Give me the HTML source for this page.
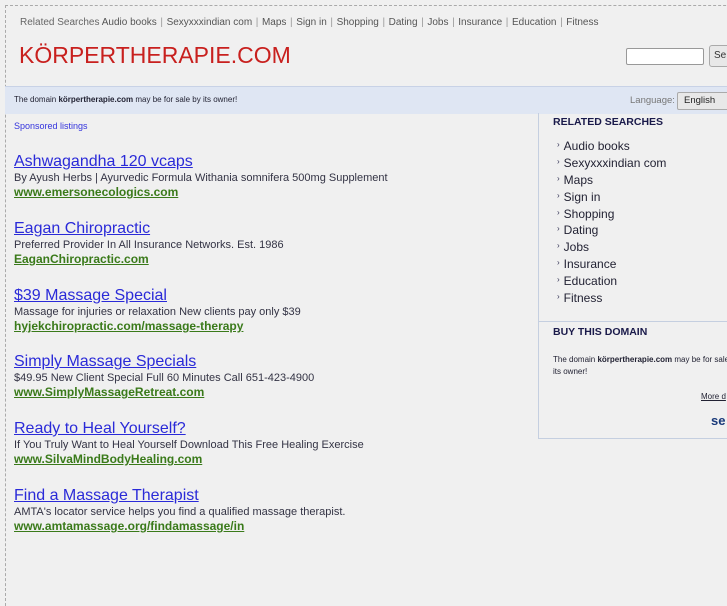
<!DOCTYPE html><html><head><meta charset="utf-8"><style>
body{margin:0;background:#f0f0f0;font-family:"Liberation Sans",sans-serif;width:727px;height:545px;overflow:hidden;position:relative}
.frame{position:absolute;left:5px;top:5px;width:760px;height:600px;border-left:1px dashed #aaa;border-top:1px dashed #aaa}
.top{position:absolute;left:20px;top:17px;font-size:10px;color:#666;white-space:nowrap}
.top span{color:#555}.top b{font-weight:normal;color:#999;margin:0 3.6px}
.logo{position:absolute;left:19px;top:42px;font-size:23px;color:#c8201e}
.srch{position:absolute;left:626px;top:48px;width:76px;height:15px;background:#fff;border:1px solid #999;border-radius:2px}
.btn{position:absolute;left:709px;top:45px;width:30px;height:20px;background:#e8e8e8;border:1px solid #aaa;border-radius:3px;font-size:10px;line-height:20px;padding-left:4px;color:#333}
.band{position:absolute;left:5px;top:86px;width:722px;height:27px;background:#dfe6f3;border-top:1px solid #c8d2e6}
.band .t{position:absolute;left:9px;top:8px;font-size:8px;color:#223}
.lang{position:absolute;left:630px;top:95px;font-size:9.5px;color:#777}
.sel{position:absolute;left:677px;top:92px;width:50px;height:16px;background:#e8e8e8;border:1px solid #aaa;border-radius:2px;font-size:9.5px;line-height:16px;padding-left:6px;color:#222}
.sp{position:absolute;left:14px;top:121px;font-size:9px;color:#3333dd}
.ad{position:absolute;left:14px}
.ad a{display:block;font-size:16px;color:#2a2ad8;text-decoration:underline;line-height:18px}
.ad p{margin:0;font-size:11px;color:#334;line-height:14px}
.ad u{display:block;font-size:12px;font-weight:bold;color:#3a7a1a;line-height:14px}
.side{position:absolute;left:538px;top:113px;width:200px;height:325px;border-left:1px solid #c5cfe0;border-bottom:1px solid #c5cfe0}
.side h4{position:absolute;left:14px;margin:0;font-size:10.5px;color:#1a1a4a}
.side ul{position:absolute;left:18px;top:25px;margin:0;padding:0;list-style:none}
.side li{font-size:12px;color:#223;height:16.9px;line-height:16.9px;white-space:nowrap}
.side li:before{content:"\203A";font-size:8px;line-height:0;margin-right:4px;color:#335;vertical-align:3px}
.hr{position:absolute;left:0;top:208px;width:200px;border-top:1px solid #c5cfe0}
</style></head><body>
<div class="frame"></div>
<div class="top">Related Searches <span>Audio books</span><b>|</b><span>Sexyxxxindian com</span><b>|</b><span>Maps</span><b>|</b><span>Sign in</span><b>|</b><span>Shopping</span><b>|</b><span>Dating</span><b>|</b><span>Jobs</span><b>|</b><span>Insurance</span><b>|</b><span>Education</span><b>|</b><span>Fitness</span></div>
<div class="logo">KÖRPERTHERAPIE.COM</div>
<div class="srch"></div><div class="btn">Se</div>
<div class="band"><div class="t">The domain <b>körpertherapie.com</b> may be for sale by its owner!</div></div>
<div class="lang">Language:</div><div class="sel">English</div>
<div class="sp">Sponsored listings</div>
<div class="ad" style="top:153px"><a>Ashwagandha 120 vcaps</a><p>By Ayush Herbs | Ayurvedic Formula Withania somnifera 500mg Supplement</p><u>www.emersonecologics.com</u></div>
<div class="ad" style="top:220px"><a>Eagan Chiropractic</a><p>Preferred Provider In All Insurance Networks. Est. 1986</p><u>EaganChiropractic.com</u></div>
<div class="ad" style="top:287px"><a>$39 Massage Special</a><p>Massage for injuries or relaxation New clients pay only $39</p><u>hyjekchiropractic.com/massage-therapy</u></div>
<div class="ad" style="top:353px"><a>Simply Massage Specials</a><p>$49.95 New Client Special Full 60 Minutes Call 651-423-4900</p><u>www.SimplyMassageRetreat.com</u></div>
<div class="ad" style="top:420px"><a>Ready to Heal Yourself?</a><p>If You Truly Want to Heal Yourself Download This Free Healing Exercise</p><u>www.SilvaMindBodyHealing.com</u></div>
<div class="ad" style="top:487px"><a>Find a Massage Therapist</a><p>AMTA's locator service helps you find a qualified massage therapist.</p><u>www.amtamassage.org/findamassage/in</u></div>
<div class="side">
<h4 style="top:3px">RELATED SEARCHES</h4>
<ul><li>Audio books</li><li>Sexyxxxindian com</li><li>Maps</li><li>Sign in</li><li>Shopping</li><li>Dating</li><li>Jobs</li><li>Insurance</li><li>Education</li><li>Fitness</li></ul>
<div class="hr"></div>
<h4 style="top:213px">BUY THIS DOMAIN</h4>
<div style="position:absolute;left:14px;top:241px;width:190px;font-size:8px;color:#223;line-height:12px">The domain <b>körpertherapie.com</b> may be for sale by its owner!</div>
<div style="position:absolute;left:162px;top:279px;font-size:8px;color:#223;text-decoration:underline">More d</div>
<div style="position:absolute;left:172px;top:300px;font-size:13px;font-weight:bold;color:#1a3a7a">se</div>
</div>
</body></html>
